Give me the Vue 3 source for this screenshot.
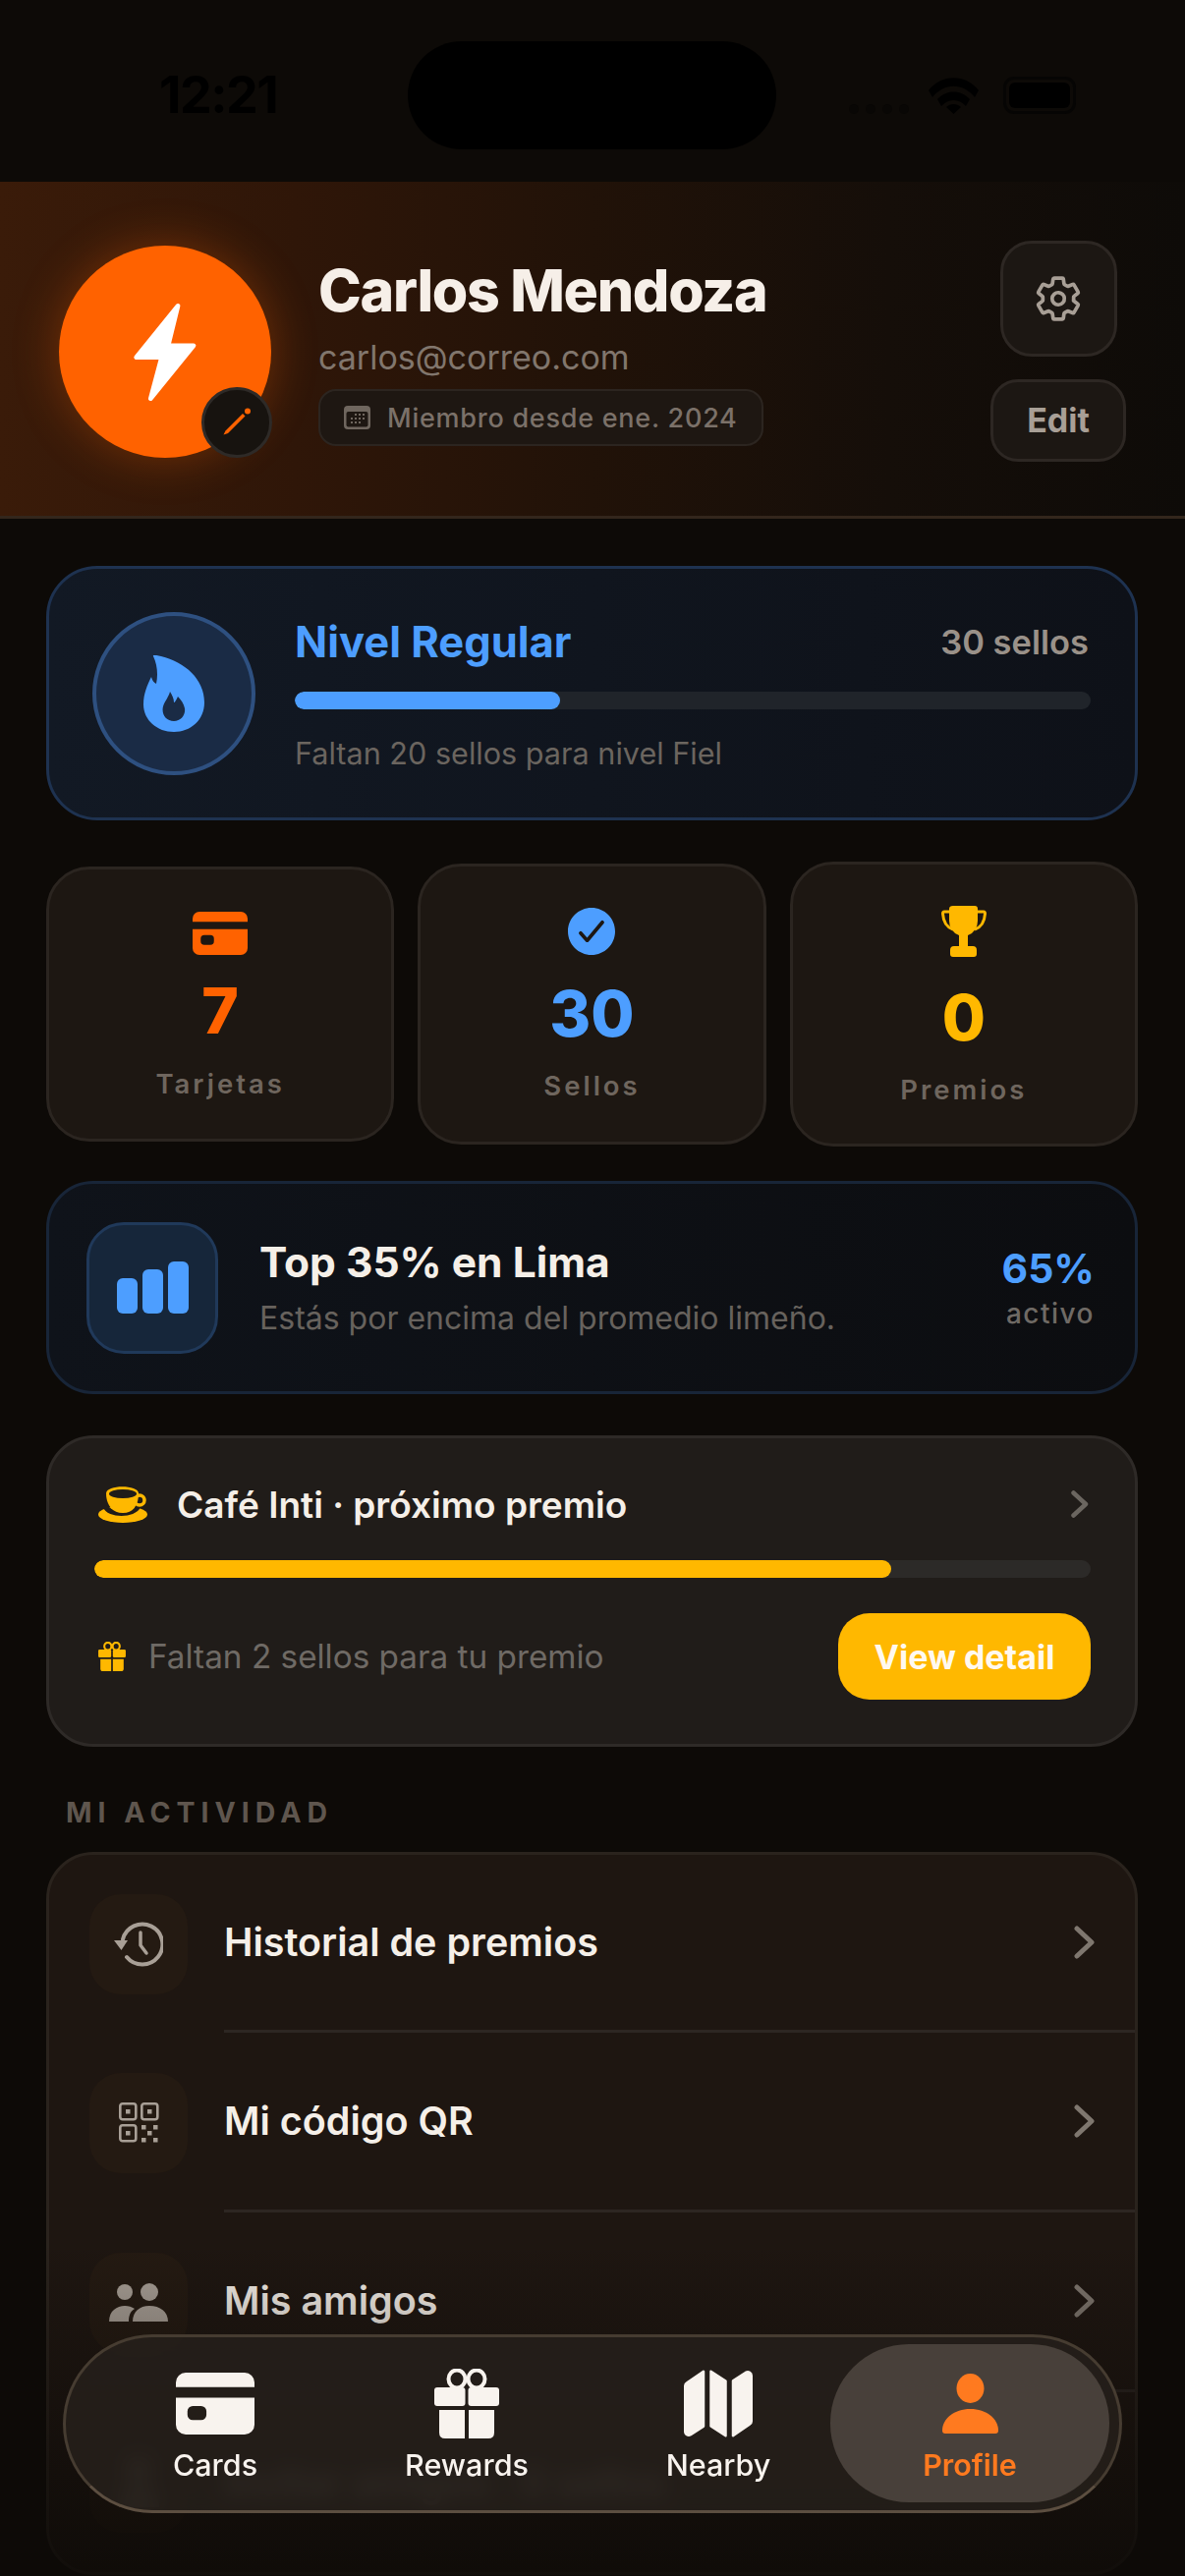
<template>
  <div class="screen">
    <div class="status">
      <span class="time">12:21</span>
      <div class="island"></div>
      <div class="status-right">
        <div class="signal"><i></i><i></i><i></i><i></i></div>
        <svg class="wifi" viewBox="0 0 51 37" width="51" height="37">
          <path d="M0 13C13-4 38-4 51 13l-4 7C35 5 16 5 4 20z" fill="#000" />
          <path d="M9 22c9-10 24-10 33 0l-4 7c-7-8-18-8-25 0z" fill="#000" />
          <path d="M18 30c4-4 11-4 15 0l-7.500 7z" fill="#000" />
        </svg>
        <div class="battery"><div></div></div>
      </div>
    </div>

    <header class="header">
      <div class="avatar">
        <svg viewBox="280 225 205 315" width="68" height="105">
          <path d="M422 240L294 398H372L338 525L470 362H392Z" fill="#fff" stroke="#fff" stroke-width="14" stroke-linejoin="round" />
        </svg>
        <div class="avatar-edit">
          <svg viewBox="0 0 30 30" width="30" height="30">
            <path d="M1.500 27.500L3.500 23.500L21 6L23.500 8.500L6 26Z" fill="#ff6200" />
            <circle cx="26" cy="3.500" r="3" fill="#ff6200" />
          </svg>
        </div>
      </div>
      <div class="info">
        <h1 class="name">Carlos Mendoza</h1>
        <div class="email">carlos@correo.com</div>
        <div class="since">
          <svg viewBox="0 0 27 24" width="27" height="24">
            <rect width="27" height="24" rx="4" fill="#6f665e" />
            <rect x="2.500" y="6" width="22" height="15.500" rx="2" fill="#1e1712" />
            <g fill="#6f665e">
              <rect x="11" y="8" width="2" height="2" /><rect x="15" y="8" width="2" height="2" /><rect x="19" y="8" width="2" height="2" />
              <rect x="7" y="12" width="2" height="2" /><rect x="11" y="12" width="2" height="2" /><rect x="15" y="12" width="2" height="2" /><rect x="19" y="12" width="2" height="2" />
              <rect x="7" y="16" width="2" height="2" /><rect x="11" y="16" width="2" height="2" /><rect x="15" y="16" width="2" height="2" />
            </g>
          </svg>
          <span>Miembro desde ene. 2024</span>
        </div>
      </div>
      <div class="actions">
        <button class="gear-btn">
          <svg viewBox="0 0 512 512" width="50" height="50">
            <path d="M262.29 192.31a64 64 0 1057.4 57.4 64.13 64.13 0 00-57.4-57.4zM416.39 256a154.34 154.34 0 01-1.53 20.79l45.21 35.46a10.81 10.81 0 012.45 13.75l-42.77 74a10.81 10.81 0 01-13.14 4.59l-44.9-18.08a16.11 16.11 0 00-15.17 1.75A164.48 164.48 0 01325 400.8a15.94 15.94 0 00-8.82 12.14l-6.73 47.89a11.08 11.08 0 01-10.68 9.17h-85.54a11.11 11.11 0 01-10.69-8.87l-6.72-47.82a16.07 16.07 0 00-9-12.22 155.3 155.3 0 01-21.46-12.57 16 16 0 00-15.11-1.71l-44.89 18.07a10.81 10.81 0 01-13.14-4.58l-42.77-74a10.8 10.8 0 012.45-13.75l38.21-30a16.05 16.05 0 006-14.08c-.36-4.17-.58-8.33-.58-12.5s.21-8.27.58-12.35a16 16 0 00-6.07-13.94l-38.19-30A10.81 10.81 0 0149.48 186l42.77-74a10.81 10.81 0 0113.14-4.59l44.9 18.08a16.11 16.11 0 0015.17-1.75A164.48 164.48 0 01187 111.2a15.94 15.94 0 008.82-12.14l6.73-47.89A11.08 11.08 0 01213.23 42h85.54a11.11 11.11 0 0110.69 8.87l6.72 47.82a16.07 16.07 0 009 12.22 155.3 155.3 0 0121.46 12.57 16 16 0 0015.11 1.71l44.89-18.07a10.81 10.81 0 0113.14 4.58l42.77 74a10.8 10.8 0 01-2.45 13.75l-38.21 30a16.05 16.05 0 00-6.05 14.08c.33 4.14.55 8.3.55 12.47z" fill="none" stroke="#a89f96" stroke-width="38" stroke-linejoin="round" />
          </svg>
        </button>
        <button class="edit-btn">Edit</button>
      </div>
    </header>

    <main class="content">
      <section class="level">
        <div class="level-icon">
          <svg viewBox="0 0 62 78" width="62" height="78">
            <path fill-rule="evenodd" d="M10 1C9-1 14 0 18 1C42 7 62 24 62 48C62 66 48 78 31 78C14 78 0 66 0 50C0 39 4 30 8 22C9 26 11 28 13 29C15 20 14 9 10 1ZM27 37C26 42 22 46 20 52C18 60 23 67 31 67C38 67 43 61 42 54C41 49 38 45 35 42C33 46 32 48 31 48C31 44 29 40 27 37Z" fill="#4d9eff" />
          </svg>
        </div>
        <div class="level-body">
          <div class="level-top">
            <span class="level-name">Nivel Regular</span>
            <span class="level-count">30 sellos</span>
          </div>
          <div class="track level-track"><div class="fill" :style="{ width: levelPct + '%' }"></div></div>
          <div class="level-hint">Faltan 20 sellos para nivel Fiel</div>
        </div>
      </section>

      <section class="stats">
        <div class="stat stat-a">
          <svg viewBox="32 80 448 352" width="56" height="44">
            <path d="M32 376a56 56 0 0056 56h336a56 56 0 0056-56V222H32zm66-76a30 30 0 0130-30h48a30 30 0 0130 30v20a30 30 0 01-30 30h-48a30 30 0 01-30-30zM424 80H88a56 56 0 00-56 56v26h448v-26a56 56 0 00-56-56z" fill="#ff6200" />
          </svg>
          <div class="stat-num orange">7</div>
          <div class="stat-label">Tarjetas</div>
        </div>
        <div class="stat stat-b">
          <svg viewBox="48 48 416 416" width="48" height="48">
            <path d="M256 48C141.31 48 48 141.31 48 256s93.31 208 208 208 208-93.31 208-208S370.69 48 256 48zm108.25 138.29l-134.4 160a16 16 0 01-12 5.71h-.27a16 16 0 01-11.89-5.3l-57.6-64a16 16 0 1123.78-21.4l45.29 50.32 122.59-145.91a16 16 0 0124.5 20.58z" fill="#4d9eff" />
          </svg>
          <div class="stat-num blue">30</div>
          <div class="stat-label">Sellos</div>
        </div>
        <div class="stat stat-c">
          <svg viewBox="0 0 46 52" width="46" height="52">
            <path d="M10 6H3Q1.500 6 1.500 8C2 16 6 22 12 24" fill="none" stroke="#ffb800" stroke-width="3" />
            <path d="M36 6H43Q44.500 6 44.500 8C44 16 40 22 34 24" fill="none" stroke="#ffb800" stroke-width="3" />
            <path d="M12 0H34Q37 0 37 3V15Q37 26 27 30V41H32Q36 41 36 45V49Q36 52 33 52H12Q9 52 9 49V45Q9 41 13 41H18V30Q8 26 8 15V3Q8 0 12 0Z" fill="#ffb800" />
          </svg>
          <div class="stat-num amber">0</div>
          <div class="stat-label">Premios</div>
        </div>
      </section>

      <section class="rank">
        <div class="rank-icon">
          <i style="height: 36px"></i><i style="height: 45px"></i><i style="height: 53px"></i>
        </div>
        <div class="rank-body">
          <div class="rank-title">Top 35% en Lima</div>
          <div class="rank-sub">Estás por encima del promedio limeño.</div>
        </div>
        <div class="rank-side">
          <div class="rank-pct">65%</div>
          <div class="rank-active">activo</div>
        </div>
      </section>

      <section class="next">
        <div class="next-top">
          <svg viewBox="0 0 50 37" width="50" height="37">
            <ellipse cx="25" cy="28.500" rx="25" ry="8.500" fill="#ffb800" />
            <path d="M7 20C11 30 36 30 41 20" fill="none" stroke="#201c19" stroke-width="5" />
            <circle cx="42" cy="14" r="5" fill="none" stroke="#ffb800" stroke-width="3.500" />
            <path d="M8 7C8-2 41-2 41 7C41 17 37 27 25 27C13 27 8 17 8 7Z" fill="#ffb800" />
            <ellipse cx="25" cy="7.500" rx="14" ry="4.500" fill="#201c19" />
          </svg>
          <span class="next-title">Café Inti · próximo premio</span>
          <svg class="chev-sm" viewBox="0 0 18 28" width="18" height="28">
            <path d="M2.500 2.500L15 14L2.500 25.500" fill="none" stroke="#6b6660" stroke-width="4.500" stroke-linecap="round" stroke-linejoin="round" />
          </svg>
        </div>
        <div class="track next-track"><div class="fill amber-fill" :style="{ width: nextPct + '%' }"></div></div>
        <div class="next-bottom">
          <svg viewBox="0 0 66 71" width="28" height="30">
            <ellipse cx="23" cy="11" rx="8.500" ry="9" fill="none" stroke="#ffb800" stroke-width="5" />
            <ellipse cx="43" cy="11" rx="8.500" ry="9" fill="none" stroke="#ffb800" stroke-width="5" />
            <rect x="0" y="19" width="31" height="19" rx="3" fill="#ffb800" />
            <rect x="35" y="19" width="31" height="19" rx="3" fill="#ffb800" />
            <path d="M5 42H31V71H11Q5 71 5 65Z" fill="#ffb800" />
            <path d="M35 42H61V65Q61 71 55 71H35Z" fill="#ffb800" />
          </svg>
          <span class="next-hint">Faltan 2 sellos para tu premio</span>
          <button class="detail-btn">View detail</button>
        </div>
      </section>

      <div class="section-label">MI ACTIVIDAD</div>
      <section class="list">
        <div class="row">
          <div class="row-icon">
            <svg viewBox="0 0 50 46" width="50" height="46">
              <path d="M9 18A20.500 20.500 0 1 1 13 36" fill="none" stroke="#a89f96" stroke-width="4" stroke-linecap="round" />
              <path d="M0 19H14L7.500 29Z" fill="#a89f96" />
              <path d="M27 11V24L33 32" fill="none" stroke="#a89f96" stroke-width="3.500" stroke-linecap="round" stroke-linejoin="round" />
            </svg>
          </div>
          <div class="row-body">
            <span>Historial de premios</span>
            <svg viewBox="0 0 21 34" width="21" height="34"><path d="M3 3L18 17L3 31" fill="none" stroke="#7f776f" stroke-width="5" stroke-linecap="round" stroke-linejoin="round" /></svg>
          </div>
        </div>
        <div class="row">
          <div class="row-icon">
            <svg viewBox="0 0 41 41" width="41" height="41">
              <g fill="none" stroke="#a89f96" stroke-width="2.600">
                <rect x="1.300" y="1.300" width="16" height="16" rx="2.500" />
                <rect x="23.300" y="1.300" width="16" height="16" rx="2.500" />
                <rect x="1.300" y="23.300" width="16" height="16" rx="2.500" />
              </g>
              <g fill="#a89f96">
                <rect x="7" y="7" width="4.500" height="4.500" /><rect x="29" y="7" width="4.500" height="4.500" /><rect x="7" y="29" width="4.500" height="4.500" />
                <rect x="23" y="23" width="4.500" height="4.500" /><rect x="35" y="23" width="4.500" height="4.500" /><rect x="29" y="29" width="4.500" height="4.500" />
                <rect x="23" y="36" width="4.500" height="4.500" /><rect x="35" y="36" width="4.500" height="4.500" />
              </g>
            </svg>
          </div>
          <div class="row-body">
            <span>Mi código QR</span>
            <svg viewBox="0 0 21 34" width="21" height="34"><path d="M3 3L18 17L3 31" fill="none" stroke="#7f776f" stroke-width="5" stroke-linecap="round" stroke-linejoin="round" /></svg>
          </div>
        </div>
        <div class="row">
          <div class="row-icon">
            <svg viewBox="0 0 60 39" width="60" height="39">
              <circle cx="16" cy="9" r="8" fill="#a89f96" />
              <circle cx="41" cy="9" r="9" fill="#a89f96" />
              <path d="M0 39C0 28 8 23 16 23C20 23 23 24 26 26C21 29 20 34 20 39Z" fill="#a89f96" />
              <path d="M24 39C24 29 31 23 41 23C52 23 60 29 60 39Z" fill="#a89f96" />
            </svg>
          </div>
          <div class="row-body">
            <span>Mis amigos</span>
            <svg viewBox="0 0 21 34" width="21" height="34"><path d="M3 3L18 17L3 31" fill="none" stroke="#7f776f" stroke-width="5" stroke-linecap="round" stroke-linejoin="round" /></svg>
          </div>
        </div>
        <div class="row last">
          <div class="row-icon">
            <svg viewBox="0 0 41 50" width="41" height="50">
              <circle cx="20" cy="12" r="12" fill="#a89f96" />
              <path d="M0 50C0 36 8 28 20 28C32 28 41 36 41 50Z" fill="#a89f96" />
            </svg>
          </div>
          <div class="row-body">
            <span>Invitar amigos · 0 sellos</span>
          </div>
        </div>
      </section>
    </main>

    <div class="fade"></div>

    <nav class="tabbar">
      <div class="tab">
        <svg viewBox="32 80 448 352" width="80" height="58">
          <path d="M32 376a56 56 0 0056 56h336a56 56 0 0056-56V222H32zm66-76a30 30 0 0130-30h48a30 30 0 0130 30v20a30 30 0 01-30 30h-48a30 30 0 01-30-30zM424 80H88a56 56 0 00-56 56v26h448v-26a56 56 0 00-56-56z" fill="#f8f3ee" />
        </svg>
        <span>Cards</span>
      </div>
      <div class="tab">
        <svg viewBox="0 0 66 71" width="66" height="71">
          <ellipse cx="23" cy="10.500" rx="8.500" ry="9" fill="none" stroke="#f8f3ee" stroke-width="4" />
          <ellipse cx="43" cy="10.500" rx="8.500" ry="9" fill="none" stroke="#f8f3ee" stroke-width="4" />
          <rect x="0" y="19" width="31.500" height="19" rx="3" fill="#f8f3ee" />
          <rect x="34.500" y="19" width="31.500" height="19" rx="3" fill="#f8f3ee" />
          <path d="M5 42H31V71H11Q5 71 5 65Z" fill="#f8f3ee" />
          <path d="M35 42H61V65Q61 71 55 71H35Z" fill="#f8f3ee" />
        </svg>
        <span>Rewards</span>
      </div>
      <div class="tab">
        <svg viewBox="32 40 448 432" width="70" height="67">
          <path d="M48.170 113.340A32 32 0 0032 141.240V438a32 32 0 0047 28.370c.43-.23.85-.47 1.260-.74l84.140-55.050a8 8 0 003.630-6.720V46.450a8 8 0 00-12.510-6.630zM212.360 39.310A8 8 0 00200 46v357.560a8 8 0 003.630 6.720l96 62.420A8 8 0 00312 466V108.670a8 8 0 00-3.640-6.730zM464.530 46.470a31.640 31.640 0 00-31.500-.88 12.070 12.070 0 00-1.250.74l-84.150 55a8 8 0 00-3.630 6.720V465.510a8 8 0 0012.520 6.630l107.070-73.460a32 32 0 0016.410-28v-296a32.760 32.760 0 00-15.470-28.410z" fill="#f8f3ee" />
        </svg>
        <span>Nearby</span>
      </div>
      <div class="tab active">
        <svg viewBox="0 0 57 61" width="57" height="61">
          <ellipse cx="28.500" cy="15" rx="14" ry="15" fill="#ff7a1f" />
          <path d="M0 58C0 46 12 36 28.500 36S57 46 57 58Q57 61 54 61H3Q0 61 0 58Z" fill="#ff7a1f" />
        </svg>
        <span>Profile</span>
      </div>
    </nav>
  </div>
</template>

<script setup>
const levelPct = 33.3
const nextPct = 80
</script>

<style>
html, body {
  margin: 0;
  background: #0d0a07;
}
</style>

<style scoped>
.screen {
  position: relative;
  width: 1206px;
  height: 2622px;
  overflow: hidden;
  background: #0d0a07;
  font-family: Inter, "Noto Sans", sans-serif;
  color: #f5efe8;
}

/* status bar */
.status {
  height: 185px;
  box-sizing: border-box;
  padding: 68px 111px 0 162px;
  display: flex;
  justify-content: space-between;
  align-items: flex-start;
}
.time {
  font-size: 52px;
  line-height: 58px;
  font-weight: 700;
  letter-spacing: -1.500px;
  color: #000;
}
.island {
  position: absolute;
  left: 415px;
  top: 42px;
  width: 375px;
  height: 110px;
  border-radius: 55px;
  background: #000;
}
.status-right {
  display: flex;
  align-items: flex-end;
  padding-top: 10px;
}
.signal {
  display: flex;
  gap: 7px;
  margin-right: 20px;
}
.signal i {
  width: 10px;
  height: 10px;
  border-radius: 50%;
  background: #090705;
}
.wifi {
  margin-right: 25px;
}
.battery {
  width: 74px;
  height: 38px;
  box-sizing: border-box;
  border: 3px solid #060504;
  border-radius: 11px;
  padding: 3px;
}
.battery div {
  height: 100%;
  border-radius: 6px;
  background: #000;
}

/* header */
.header {
  height: 343px;
  box-sizing: border-box;
  padding: 6px 60px 0;
  display: flex;
  align-items: center;
  border-bottom: 3px solid #33261c;
  background: linear-gradient(90deg, #3a1b09 0%, #2f1608 25%, #211208 50%, #150e09 75%, #0e0b08 100%);
}
.avatar {
  position: relative;
  flex: none;
  width: 216px;
  height: 216px;
  border-radius: 50%;
  background: #ff6200;
  box-shadow: 0 0 48px rgba(255, 98, 0, 0.32);
  display: flex;
  align-items: center;
  justify-content: center;
}
.avatar-edit {
  position: absolute;
  right: -1px;
  bottom: 0;
  width: 72px;
  height: 72px;
  box-sizing: border-box;
  border: 3px solid #2e2a27;
  border-radius: 50%;
  background: #17130f;
  display: flex;
  align-items: center;
  justify-content: center;
}
.info {
  margin-left: 48px;
  display: flex;
  flex-direction: column;
  align-items: flex-start;
}
.name {
  margin: 0;
  font-size: 59px;
  line-height: 68px;
  font-weight: 800;
  letter-spacing: -1.300px;
  color: #f6efe8;
}
.email {
  margin-top: 14px;
  font-size: 34px;
  line-height: 40px;
  color: #81766d;
}
.since {
  margin-top: 12px;
  height: 58px;
  box-sizing: border-box;
  padding: 0 24px;
  display: flex;
  align-items: center;
  gap: 17px;
  border: 2px solid #2c2520;
  border-radius: 18px;
  background: #1e1712;
  font-size: 27px;
  font-weight: 500;
  letter-spacing: 0.750px;
  color: #7b7169;
}
.actions {
  margin-left: auto;
  margin-top: -2px;
  display: flex;
  flex-direction: column;
  align-items: center;
  gap: 23px;
}
.gear-btn,
.edit-btn {
  font-family: inherit;
  box-sizing: border-box;
  border: 3px solid #2d2723;
  background: #1c1713;
  display: flex;
  align-items: center;
  justify-content: center;
  padding: 0;
}
.gear-btn {
  width: 119px;
  height: 118px;
  border-radius: 32px;
}
.edit-btn {
  width: 138px;
  height: 84px;
  border-radius: 28px;
  font-size: 34px;
  font-weight: 700;
  color: #a89f96;
}

/* content */
.content {
  padding: 48px 48px 0 47px;
  display: flex;
  flex-direction: column;
}
.level {
  height: 259px;
  box-sizing: border-box;
  padding: 0 47px 0 44px;
  display: flex;
  align-items: center;
  gap: 40px;
  border: 3px solid #1e3250;
  border-radius: 52px;
  background: linear-gradient(90deg, #121924 0%, #0e1118 100%);
}
.level-icon {
  flex: none;
  width: 166px;
  height: 166px;
  box-sizing: border-box;
  border: 4px solid #2e5080;
  border-radius: 50%;
  background: #1a2b45;
  display: flex;
  align-items: center;
  justify-content: center;
}
.level-body {
  flex: 1;
  min-width: 0;
  padding-top: 3px;
}
.level-top {
  display: flex;
  justify-content: space-between;
  align-items: center;
}
.level-name {
  font-size: 43.500px;
  line-height: 48px;
  font-weight: 700;
  color: #4d9eff;
}
.level-count {
  font-size: 34.500px;
  font-weight: 600;
  color: #9a9189;
}
.track {
  height: 18px;
  border-radius: 9px;
  overflow: hidden;
}
.level-track {
  margin-top: 27px;
  margin-right: -2px;
  background: #20242a;
}
.fill {
  height: 100%;
  border-radius: 9px;
  background: #4d9eff;
}
.amber-fill {
  background: #ffb800;
}
.level-hint {
  margin-top: 27px;
  font-size: 30.600px;
  line-height: 36px;
  color: #6b655f;
}

.stats {
  margin-top: 42px;
  height: 290px;
  display: flex;
  align-items: center;
  gap: 24px;
}
.stat {
  flex: 1;
  box-sizing: border-box;
  border: 3px solid #2b2520;
  border-radius: 44px;
  background: #1d1712;
  display: flex;
  flex-direction: column;
  align-items: center;
}
.stat-a {
  height: 280px;
  padding-top: 43px;
}
.stat-b {
  height: 286px;
  padding-top: 42px;
}
.stat-c {
  height: 290px;
  padding-top: 42px;
}
.stat-num {
  font-size: 64px;
  line-height: 72px;
  font-weight: 800;
}
.stat-a .stat-num {
  margin-top: 21px;
}
.stat-b .stat-num {
  margin-top: 24px;
}
.stat-c .stat-num {
  margin-top: 26px;
}
.orange {
  color: #ff6200;
}
.blue {
  color: #4d9eff;
}
.amber {
  color: #ffb800;
}
.stat-label {
  margin-top: 20px;
  font-size: 27.500px;
  line-height: 34px;
  font-weight: 600;
  letter-spacing: 3px;
  color: #6f665e;
}
.stat-a .stat-label {
  margin-top: 21px;
}

.rank {
  margin-top: 35px;
  height: 217px;
  box-sizing: border-box;
  padding: 0 41px 0 38px;
  display: flex;
  align-items: center;
  border: 3px solid #182538;
  border-radius: 48px;
  background: linear-gradient(90deg, #0f131a 0%, #0c0d10 100%);
}
.rank-icon {
  flex: none;
  width: 134px;
  height: 134px;
  box-sizing: border-box;
  padding-bottom: 38px;
  display: flex;
  align-items: flex-end;
  justify-content: center;
  gap: 5px;
  border: 3px solid #20395a;
  border-radius: 38px;
  background: #16263a;
}
.rank-icon i {
  width: 21px;
  border-radius: 6px;
  background: #4d9eff;
}
.rank-body {
  margin-left: 42px;
  flex: 1;
}
.rank-title {
  font-size: 42.500px;
  line-height: 48px;
  font-weight: 700;
}
.rank-sub {
  margin-top: 14px;
  font-size: 32px;
  line-height: 38px;
  color: #67625d;
}
.rank-side {
  text-align: right;
}
.rank-pct {
  font-size: 41px;
  line-height: 46px;
  font-weight: 700;
  color: #4d9eff;
}
.rank-active {
  margin-top: 6px;
  font-size: 28px;
  line-height: 34px;
  letter-spacing: 1.500px;
  font-weight: 500;
  color: #6f6a65;
}

.next {
  margin-top: 42px;
  height: 317px;
  box-sizing: border-box;
  padding: 45px 45px 0 46px;
  border: 3px solid #2e2a27;
  border-radius: 48px;
  background: #201c19;
}
.next-top {
  height: 44px;
  display: flex;
  align-items: center;
  padding-left: 4px;
}
.next-title {
  margin-left: 30px;
  font-size: 37px;
  font-weight: 600;
}
.chev-sm {
  margin-left: auto;
  margin-right: 2px;
}
.next-track {
  margin-top: 35px;
  background: #2c2a28;
}
.next-bottom {
  margin-top: 36px;
  display: flex;
  align-items: center;
  padding-left: 4px;
}
.next-hint {
  margin-left: 23px;
  font-size: 33.300px;
  color: #6f6a65;
}
.detail-btn {
  margin-left: auto;
  width: 257px;
  height: 88px;
  border: 0;
  border-radius: 32px;
  background: #ffb800;
  font-family: inherit;
  font-size: 34px;
  font-weight: 700;
  color: #fff9f0;
}

.section-label {
  margin: 50px 0 23px 20px;
  font-size: 28.500px;
  line-height: 34px;
  font-weight: 700;
  letter-spacing: 6px;
  color: #5f564e;
}
.list {
  box-sizing: border-box;
  border: 3px solid #2a231d;
  border-radius: 48px;
  background: #1e1611;
  overflow: hidden;
}
.row {
  display: flex;
  align-items: center;
  padding-left: 41px;
  gap: 37px;
}
.row-icon {
  flex: none;
  width: 100px;
  height: 102px;
  border-radius: 32px;
  background: #241a12;
  display: flex;
  align-items: center;
  justify-content: center;
}
.row-body {
  flex: 1;
  height: 183px;
  box-sizing: border-box;
  padding-right: 41px;
  display: flex;
  align-items: center;
  justify-content: space-between;
  border-bottom: 3px solid #2d2622;
  font-size: 39.500px;
  font-weight: 600;
  color: #f5efe8;
}
.row:first-child .row-body {
  height: 181px;
}
.row.last .row-body {
  border-bottom: 0;
}

.fade {
  position: absolute;
  left: 0;
  right: 0;
  bottom: 0;
  height: 340px;
  background: linear-gradient(180deg, rgba(13, 10, 7, 0) 0%, rgba(13, 10, 7, 0.85) 100%);
  pointer-events: none;
}

.tabbar {
  position: absolute;
  left: 64px;
  top: 2376px;
  width: 1078px;
  height: 182px;
  box-sizing: border-box;
  padding: 0 24px;
  display: flex;
  border: 3px solid #463c31;
  border-bottom-color: #5c4e40;
  border-radius: 91px;
  background: rgba(38, 32, 27, 0.85);
  backdrop-filter: blur(10px);
}
.tab {
  position: relative;
  flex: 1;
  height: 100%;
  display: flex;
  flex-direction: column;
  align-items: center;
  font-size: 30.500px;
  font-weight: 500;
  color: #f8f3ee;
}
.tab svg {
  position: relative;
  height: 71px;
  margin-top: 32px;
}
.tab span {
  position: relative;
  margin-top: 8px;
}
.tab.active {
  font-weight: 600;
  color: #ff7a1f;
}
.tab.active::before {
  content: "";
  position: absolute;
  left: -14px;
  right: -14px;
  top: 7px;
  bottom: 8px;
  border-radius: 80px;
  background: #48403a;
}
</style>
